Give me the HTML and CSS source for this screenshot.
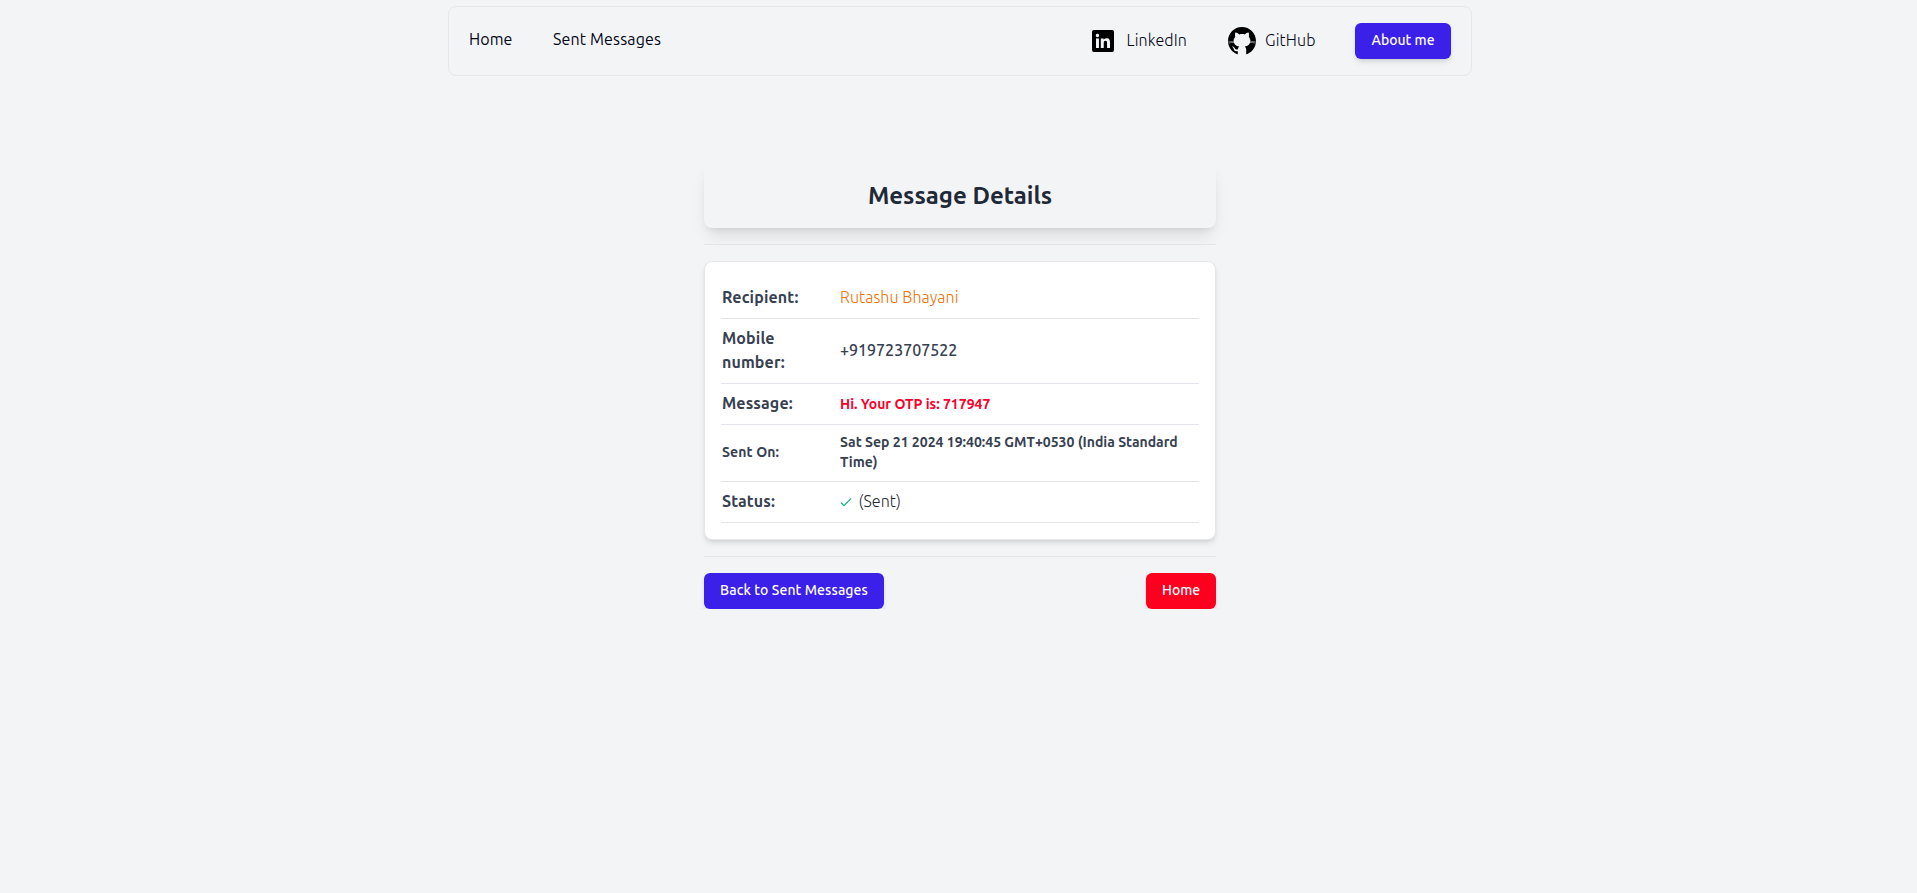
FILE: index.html
```html
<!DOCTYPE html>
<html lang="en">
<head>
<meta charset="utf-8">
<title>Message Details</title>
<link rel="stylesheet" href="styles.css">
</head>
<body>
<div class="page">
  <nav class="nav">
    <div class="nav-links">
      <a class="nav-home">Home</a>
      <a class="nav-sent">Sent Messages</a>
    </div>
    <div class="nav-social">
      <a class="social linkedin">
        <svg width="30" height="30" viewBox="0 0 30 30"><path d="M24 4H6a2 2 0 0 0-2 2v18a2 2 0 0 0 2 2h18a2 2 0 0 0 2-2V6a2 2 0 0 0-2-2zM10.954 22h-2.95v-9.492h2.95V22zM9.449 11.151a1.72 1.72 0 1 1 0-3.44 1.72 1.72 0 0 1 0 3.44zM22.004 22h-2.948v-4.616c0-1.101-.02-2.517-1.533-2.517-1.535 0-1.771 1.199-1.771 2.437V22h-2.948v-9.492h2.83v1.297h.04c.394-.746 1.356-1.533 2.791-1.533 2.987 0 3.539 1.966 3.539 4.522V22z"/></svg>
        <span>LinkedIn</span>
      </a>
      <a class="social github">
        <svg width="28" height="28" viewBox="6 6 52 52"><path d="M32 6C17.641 6 6 17.641 6 32c0 12.277 8.512 22.56 19.955 25.286-.592-.141-1.179-.299-1.755-.479V50.85c0 0-.975.325-2.275.325-3.637 0-5.148-3.245-5.525-4.875-.229-.993-.827-1.934-1.469-2.509-.767-.684-1.126-.686-1.131-.92-.01-.491.658-.471.975-.471 1.625 0 2.857 1.729 3.429 2.623 1.417 2.207 2.938 2.577 3.721 2.577.975 0 1.817-.146 2.397-.426.268-1.888 1.108-3.57 2.478-4.774-6.097-1.219-10.4-4.716-10.4-10.4 0-2.928 1.175-5.619 3.133-7.792C19.333 23.641 19 22.494 19 20.625c0-1.235.086-2.751.65-4.225 0 0 3.708.026 7.205 3.338C28.469 19.268 30.196 19 32 19s3.531.268 5.145.738c3.497-3.312 7.205-3.338 7.205-3.338.567 1.474.65 2.99.65 4.225 0 2.015-.268 3.19-.432 3.697C46.466 26.475 47.6 29.124 47.6 32c0 5.684-4.303 9.181-10.4 10.4 1.628 1.43 2.6 3.513 2.6 5.85v8.557c-.576.181-1.162.338-1.755.479C49.488 54.56 58 44.277 58 32 58 17.641 46.359 6 32 6z"/><path class="whiskers" d="M6.3 33.6Q11 32.8 17 33.4M7 36Q12 34.4 17.5 35M57.7 33.6Q53 32.8 47 33.4M57 36Q52 34.4 46.5 35"/></svg>
        <span>GitHub</span>
      </a>
      <a class="button about">About me</a>
    </div>
  </nav>
  <main class="details">
    <h1 class="title"><span>Message Details</span></h1>
    <hr class="rule">
    <section class="card">
      <div class="row"><div class="label">Recipient:</div><div class="value recipient">Rutashu Bhayani</div></div>
      <div class="row"><div class="label">Mobile<br>number:</div><div class="value mobile">+919723707522</div></div>
      <div class="row"><div class="label">Message:</div><div class="value message">Hi. Your OTP is: 717947</div></div>
      <div class="row small"><div class="label">Sent On:</div><div class="value date">Sat Sep 21 2024 19:40:45 GMT+0530 (India Standard<br>Time)</div></div>
      <div class="row"><div class="label">Status:</div><div class="value status"><svg width="12" height="12" viewBox="0 0 12 12"><path d="M1 6.7 4 9.6 11 2.6"/></svg><span>(Sent)</span></div></div>
    </section>
    <hr class="rule">
    <div class="actions">
      <a class="button back">Back to Sent Messages</a>
      <a class="button home">Home</a>
    </div>
  </main>
</div>
</body>
</html>
```
FILE: styles.css
```css
* { box-sizing: border-box; }
html { overflow: hidden; background: #f3f4f6; }
body {
  margin: 0;
  background: #f3f4f6;
  font: 400 16px/24px Ubuntu, "Noto Sans", sans-serif;
  color: #020617;
}
.page { width: 1920px; padding-top: 6px; }
.nav {
  display: flex;
  justify-content: space-between;
  align-items: center;
  width: 1024px;
  height: 70px;
  margin: 0 auto;
  padding: 0 20px;
  border: 1px solid #e5e7eb;
  border-radius: 8px;
}
.nav-links { display: flex; gap: 40px; padding-bottom: 4px; white-space: nowrap; }
.nav-home { width: 44px; letter-spacing: .1px; }
.nav-sent { width: 110px; letter-spacing: .15px; }
.nav-social { display: flex; align-items: center; }
.social { display: flex; align-items: center; font-weight: 300; letter-spacing: .12px; color: #020617; white-space: nowrap; }
.social span { padding-bottom: 2px; }
.social svg { display: block; fill: #000; }
.social .whiskers { fill: none; stroke: #e5e7eb; stroke-width: .9; }
.linkedin { width: 140px; gap: 8.5px; }
.github { width: 127px; gap: 9px; }
.button {
  height: 36px;
  padding: 0 16px;
  border-radius: 6px;
  background: #3b20ea;
  color: #fff;
  font-size: 14px;
  font-weight: 500;
  line-height: 34px;
  text-align: center;
  white-space: nowrap;
  box-shadow: 0 4px 6px -1px rgba(0, 0, 0, .1), 0 2px 4px -2px rgba(0, 0, 0, .1);
}
.about { width: 96px; }
.details { width: 512px; margin: 88px auto 0; }
.title {
  margin: 0;
  padding: 16px;
  border-radius: 8px;
  background: #f3f4f6;
  color: #1f2937;
  font-size: 24px;
  font-weight: 600;
  line-height: 32px;
  text-align: center;
  box-shadow: 0 10px 15px -3px rgba(0, 0, 0, .1), 0 4px 6px -4px rgba(0, 0, 0, .1);
}
.rule { position: relative; height: 1px; margin: 16px 0; border: 0; background: #e2e4ea; }
.card {
  padding: 16px;
  border: 1px solid #e5e7eb;
  border-radius: 8px;
  background: #fff;
  box-shadow: 0 4px 6px -1px rgba(0, 0, 0, .1), 0 2px 4px -2px rgba(0, 0, 0, .1);
}
.row {
  display: grid;
  grid-template-columns: 118px 1fr;
  align-items: center;
  padding: 7px 0 9px 1px;
  border-bottom: 1px solid #e2e4ea;
  color: #374151;
  white-space: nowrap;
}
.label { font-weight: 700; letter-spacing: .12px; }
.recipient { color: #ec6f00; font-weight: 300; letter-spacing: .07px; }
.mobile { font-weight: 500; color: #374151; }
.message { padding-top: 2px; line-height: 22px; color: #f9002a; font-size: 14px; font-weight: 600; }
.small { font-size: 14px; line-height: 20px; }
.date { font-weight: 600; }
.status { display: flex; align-items: center; gap: 6.5px; color: #1f2937; font-weight: 300; letter-spacing: .1px; }
.status svg { margin-top: 2px; fill: none; stroke: #10b981; stroke-width: 1.3; }
.actions { display: flex; justify-content: space-between; }
.back { width: 180px; padding: 0; letter-spacing: .09px; }
.home { width: 70px; background: #fd0020; }
```
